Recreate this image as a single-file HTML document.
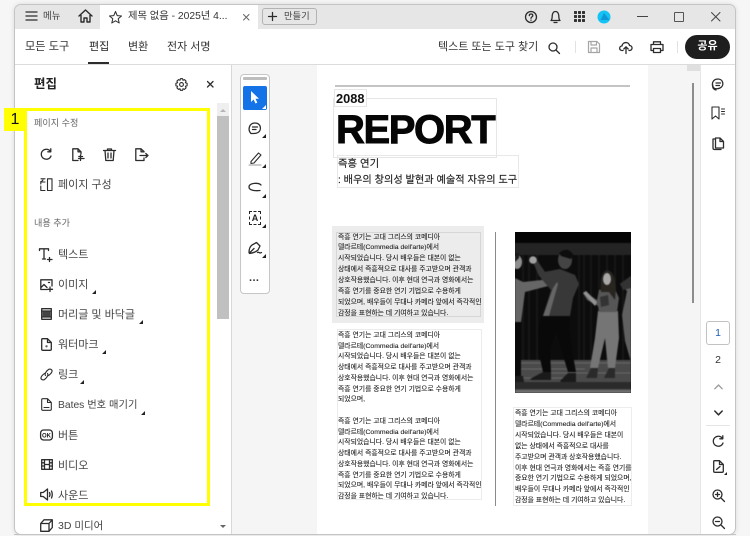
<!DOCTYPE html>
<html lang="ko">
<head>
<meta charset="utf-8">
<style>
html,body{margin:0;padding:0;width:750px;height:536px;overflow:hidden;background:#f6f6f6}
body{position:relative;font-family:"Liberation Sans","Noto Sans CJK KR",sans-serif;color:#2c2c2c}
.a{position:absolute;white-space:nowrap}
.t{position:absolute;white-space:nowrap;line-height:14px;height:14px}
svg{position:absolute;overflow:visible}
svg.i{fill:none;stroke:#2c2c2c;stroke-width:1.3;stroke-linecap:round;stroke-linejoin:round}
.tri{position:absolute;width:0;height:0;border-left:4px solid transparent;border-bottom:4px solid #222}
.m{font-size:11px;color:#444;left:58px}
.d{position:absolute;font-size:6.85px;line-height:10.73px;color:#222;white-space:nowrap;-webkit-text-stroke:.1px #222}
</style>
</head>
<body>
<div class="a" style="left:14px;top:4px;width:722px;height:531px;background:#fff;border:1px solid #c4c4c4;border-radius:7px;box-sizing:border-box;overflow:hidden;box-shadow:0 0 5px rgba(0,0,0,.12)">
  <div class="a" style="left:0;top:0;width:722px;height:24px;background:#e6e6e6"></div>
  <div class="a" style="left:85px;top:0;width:158px;height:24px;background:#fff"></div>
  <div class="a" style="left:0;top:59px;width:722px;height:1px;background:#dcdcdc"></div>
  <div class="a" style="left:216px;top:60px;width:86px;height:471px;background:#f5f5f5;border-left:1px solid #d8d8d8;box-sizing:border-box"></div>
  <div class="a" style="left:633px;top:60px;width:52px;height:471px;background:#f5f5f5"></div>
  <div class="a" style="left:672px;top:60px;width:13px;height:6px;background:#dfdfdf"></div>
  <div class="a" style="left:685px;top:60px;width:1px;height:471px;background:#e6e6e6"></div>
</div>

<!-- title bar -->
<svg class="i" style="left:26px;top:11px" width="12" height="11"><path d="M0 1H11M0 5H11M0 9H11"/></svg>
<div class="t" style="left:43px;top:10px;font-size:9.5px;color:#444">메뉴</div>
<svg class="i" style="left:78px;top:9px;stroke-width:1.4" width="15" height="14"><path d="M1 7 7.5 1 14 7M3 6V13H6V9H9V13H12V6"/></svg>
<svg class="i" style="left:109px;top:11px;stroke-width:1" width="13" height="13"><path d="M6.5 .5 8.2 4.6 12.5 5 9.2 7.8 10.2 12 6.5 9.8 2.8 12 3.8 7.8 .5 5 4.8 4.6Z"/></svg>
<div class="t" style="left:128px;top:10px;font-size:10.3px;color:#333">제목 없음 - 2025년 4...</div>
<svg class="i" style="left:243px;top:14px;stroke:#666;stroke-width:1" width="7" height="7"><path d="M.5 .5 6 6M6 .5 .5 6"/></svg>
<div class="a" style="left:262px;top:8px;width:55px;height:17px;border:1px solid #b3b3b3;border-radius:3px;box-sizing:border-box"></div>
<svg class="i" style="left:268px;top:12px;stroke-width:1.3" width="9" height="9"><path d="M4.5 .5V8.5M.5 4.5H8.5"/></svg>
<div class="t" style="left:284px;top:9px;font-size:9.3px;color:#444">만들기</div>

<svg class="i" style="left:525px;top:11px" width="12" height="12"><circle cx="6" cy="6" r="5.5"/><path d="M4.3 4.6C4.3 2.5 7.8 2.5 7.8 4.6 7.8 6 6 5.8 6 7.3M6 9V9.3"/></svg>
<svg class="i" style="left:550px;top:10px" width="11" height="14"><path d="M1 10.5C2.5 9 2 7 2.3 5 2.7 2.8 4 1.5 5.5 1.5S8.3 2.8 8.7 5C9 7 8.5 9 10 10.5ZM4 12.5H7"/></svg>
<svg style="left:574px;top:11px" width="11" height="11" fill="#333"><rect x="0" y="0" width="3" height="3" rx=".6"/><rect x="4" y="0" width="3" height="3" rx=".6"/><rect x="8" y="0" width="3" height="3" rx=".6"/><rect x="0" y="4" width="3" height="3" rx=".6"/><rect x="4" y="4" width="3" height="3" rx=".6"/><rect x="8" y="4" width="3" height="3" rx=".6"/><rect x="0" y="8" width="3" height="3" rx=".6"/><rect x="4" y="8" width="3" height="3" rx=".6"/><rect x="8" y="8" width="3" height="3" rx=".6"/></svg>
<svg style="left:597px;top:10px" width="14" height="14"><circle cx="7" cy="7" r="6.5" fill="#12c3f4"/><path d="M7 3 12.5 10H3.5Z" fill="#1196d6"/></svg>
<div class="a" style="left:637px;top:16px;width:11px;height:1.3px;background:#444"></div>
<div class="a" style="left:674px;top:12px;width:10px;height:10px;border:1px solid #555;box-sizing:border-box;border-radius:1px"></div>
<svg class="i" style="left:711px;top:12px;stroke:#444;stroke-width:1" width="10" height="10"><path d="M.5 .5 9 9M9 .5 .5 9"/></svg>

<!-- menu row -->
<div class="t" style="left:25px;top:40px;font-size:11.2px;color:#333">모든 도구</div>
<div class="t" style="left:89px;top:40px;font-size:11px;color:#222">편집</div>
<div class="t" style="left:128px;top:40px;font-size:11px;color:#333">변환</div>
<div class="t" style="left:167px;top:40px;font-size:11px;color:#333">전자 서명</div>
<div class="a" style="left:88px;top:62px;width:21px;height:2px;background:#2c2c2c"></div>

<div class="t" style="left:438px;top:40px;font-size:11px;color:#333">텍스트 또는 도구 찾기</div>
<svg class="i" style="left:548px;top:42px" width="12" height="12"><circle cx="5" cy="5" r="4"/><path d="M8 8 11.5 11.5"/></svg>
<div class="a" style="left:575px;top:41px;width:1px;height:12px;background:#e2e2e2"></div>
<svg class="i" style="left:588px;top:41px;stroke:#a5a5a5;stroke-width:1.2" width="12" height="12"><path d="M.5 .5H9L11.5 3V11.5H.5ZM3 .5V4H8.5V.5M3 11.5V7H9V11.5"/></svg>
<svg class="i" style="left:619px;top:41px" width="14" height="13"><path d="M4 9.5H3C-.2 9.5 0 5 3 5 3.5 .5 10 .5 10.5 4.5 13.8 4.5 14 9.5 10.5 9.5H10M7 12.5V6M4.8 8 7 5.8 9.2 8"/></svg>
<svg class="i" style="left:650px;top:41px" width="14" height="12"><path d="M3.5 3V.8H10.5V3M3 9.5H1V3.5H13V9.5H11M3.5 7.5H10.5V11.5H3.5Z"/></svg>
<div class="a" style="left:677px;top:41px;width:1px;height:12px;background:#e2e2e2"></div>
<div class="a" style="left:685px;top:35px;width:45px;height:24px;background:#1e1e1e;border-radius:12px;color:#fff;font-size:11px;font-weight:700;text-align:center;line-height:23px">공유</div>

<!-- left panel -->
<div class="t" style="left:34px;top:77px;font-size:12.5px;font-weight:700;color:#222">편집</div>
<svg class="i" style="left:175px;top:78px;stroke-width:1.1" width="13" height="13"><circle cx="6.5" cy="6.5" r="1.9"/><path d="M5.4 .7H7.6L8 2.3 9.5 1.6 11.1 3.2 10.4 4.7 12.1 5.3V7.7L10.4 8.3 11.1 9.8 9.5 11.4 8 10.7 7.6 12.3H5.4L5 10.7 3.5 11.4 1.9 9.8 2.6 8.3 .9 7.7V5.3L2.6 4.7 1.9 3.2 3.5 1.6 5 2.3Z"/></svg>
<svg class="i" style="left:207px;top:81px" width="7" height="7"><path d="M.5 .5 6 6M6 .5 .5 6"/></svg>

<div class="a" style="left:24px;top:108px;width:186px;height:398px;border:3px solid #ffff00;box-sizing:border-box"></div>
<div class="a" style="left:4px;top:108px;width:22px;height:23px;background:#ffff00;color:#111;font-size:16px;line-height:23px;text-align:center">1</div>

<div class="t" style="left:34px;top:116px;font-size:9.1px;color:#666">페이지 수정</div>
<svg class="i" style="left:40px;top:148px" width="12" height="13"><path d="M10.5 3.5A5 5 0 1 0 11 8M10.8 .8V3.8H7.8"/></svg>
<svg class="i" style="left:72px;top:148px" width="13" height="14"><path d="M6 12.5H.8V.8H6L9 3.8V6M6 .8V3.8H9M8.5 7V12.5M6.5 10.5H12M6.8 8.5H10.5"/></svg>
<svg class="i" style="left:103px;top:148px" width="13" height="13"><path d="M.5 2.5H12.5M4.5 2.5V1H8.5V2.5M2 2.5 2.8 12.5H10.2L11 2.5M5 5V10M8 5V10"/></svg>
<svg class="i" style="left:135px;top:148px" width="14" height="13"><path d="M9 4V3.5L6 .8H.8V12.5H9V10M6 .8V3.8H9M5 7.5H13M10.8 5.5 13 7.5 10.8 9.5"/></svg>
<svg class="i" style="left:40px;top:178px;stroke-width:1.1" width="13" height="13"><path d="M7.5 .8H12V12.5H7.5ZM5 .8H1M.8 3.5V6M.8 8V12.5H5M.8 4H5M3 2 1 4"/></svg>
<div class="t m" style="top:178px">페이지 구성</div>

<div class="t" style="left:34px;top:216px;font-size:9.1px;color:#666">내용 추가</div>

<svg class="i" style="left:39px;top:248px" width="14" height="14"><path d="M.5 2.5V.8H9.5V2.5M5 .8V11M3.5 11H6.5M10.5 9.5V13.5M8.5 11.5H13"/></svg>
<div class="t m" style="top:248px">텍스트</div>
<svg class="i" style="left:40px;top:279px" width="13" height="13"><path d="M7.5 10.5H.8V.8H12V7M1 8.5 4 5.5 7 8.5M8.5 3.5H9.5M10 8V12.5M8 10.3H12.5"/></svg>
<div class="t m" style="top:278px">이미지</div>
<div class="tri" style="left:92px;top:290px"></div>
<svg class="i" style="left:41px;top:308px" width="11" height="12"><rect x=".7" y=".7" width="9.6" height="10.6"/><path d="M.7 3H10.3M.7 9H10.3"/><rect x="1.5" y="3.5" width="8" height="5" fill="#444" stroke="none"/></svg>
<div class="t m" style="top:308px">머리글 및 바닥글</div>
<div class="tri" style="left:139px;top:320px"></div>
<svg class="i" style="left:41px;top:338px" width="11" height="13"><path d="M6.5 .7H1.7Q.7 .7 .7 1.7V11.3Q.7 12.3 1.7 12.3H9.3Q10.3 12.3 10.3 11.3V4.5ZM6.5 .7V4.5H10.3"/><circle cx="5.5" cy="8.3" r="1.2" fill="#666" stroke="none"/></svg>
<div class="t m" style="top:338px">워터마크</div>
<div class="tri" style="left:102px;top:350px"></div>
<svg class="i" style="left:40px;top:368px;stroke-width:1.1" width="13" height="13"><path d="M5.5 7.5C4 6 7 2.5 8.5 1.5 10 .5 12.5 1.5 12 3.5 11.8 4.8 9.5 7 8 7.8M7.5 5.5C9 7 6 10.5 4.5 11.5 3 12.5 .5 11.5 1 9.5 1.2 8.2 3.5 6 5 5.2"/></svg>
<div class="t m" style="top:368px">링크</div>
<div class="tri" style="left:80px;top:380px"></div>
<svg class="i" style="left:41px;top:398px" width="11" height="13"><path d="M6.5 .7H1.7Q.7 .7 .7 1.7V11.3Q.7 12.3 1.7 12.3H9.3Q10.3 12.3 10.3 11.3V4.5ZM6.5 .7V4.5H10.3M3 9.5H8" stroke-width="1.1"/></svg>
<div class="t" style="left:58px;top:399px;font-size:10.3px;color:#444">Bates 번호 매기기</div>
<div class="tri" style="left:141px;top:411px"></div>
<svg class="i" style="left:40px;top:429px" width="13" height="12"><rect x=".6" y="1" width="11.8" height="10" rx="3"/><text x="6.5" y="8.3" font-size="6" font-weight="700" text-anchor="middle" fill="#222" stroke="none" font-family="Liberation Sans">OK</text></svg>
<div class="t m" style="top:429px">버튼</div>
<svg class="i" style="left:41px;top:459px" width="12" height="11"><rect x=".7" y=".7" width="10.6" height="9.6"/><path d="M3.5 .7V10.3M8.5 .7V10.3M.7 3.8H3.5M.7 7H3.5M8.5 3.8H11.3M8.5 7H11.3M3.5 5.5H8.5"/></svg>
<div class="t m" style="top:459px">비디오</div>
<svg class="i" style="left:40px;top:488px" width="14" height="13"><path d="M.7 4.5H3.2L7.5 1V12L3.2 8.5H.7ZM9.5 4.5Q10.5 6.5 9.5 8.5M11.5 3Q13 6.5 11.5 10"/></svg>
<div class="t m" style="top:489px">사운드</div>
<svg class="i" style="left:40px;top:519px" width="13" height="13"><path d="M.7 4.5H9V12.3H.7ZM.7 4.5 4 .8H12.3L9 4.5M12.3 .8V8.500L9 12.3"/></svg>
<div class="t" style="left:58px;top:519px;font-size:10.5px;color:#444">3D 미디어</div>

<!-- panel scrollbar -->
<div class="a" style="left:217px;top:103px;width:12px;height:14px;background:#efefef"></div>
<div class="a" style="left:217px;top:116px;width:12px;height:203px;background:#c0c0c0"></div>
<div class="a" style="left:220px;top:109px;width:0;height:0;border-left:3px solid transparent;border-right:3px solid transparent;border-bottom:3px solid #b5b5b5"></div>
<div class="a" style="left:220px;top:525px;width:0;height:0;border-left:3px solid transparent;border-right:3px solid transparent;border-top:3px solid #666"></div>

<!-- vertical tool strip -->
<div class="a" style="left:240px;top:74px;width:30px;height:220px;background:#fff;border:1px solid #c6c6c6;border-radius:4px;box-sizing:border-box"></div>
<div class="a" style="left:243px;top:77px;width:24px;height:3px;background:#bdbdbd;border-radius:1px"></div>
<div class="a" style="left:243px;top:86px;width:24px;height:24px;background:#1473e6;border-radius:2px"></div>
<svg style="left:250px;top:91px" width="11" height="14" fill="#fff"><path d="M1 0V11L3.6 8.5 5.5 12.5 7.3 11.6 5.5 7.8H9Z"/></svg>
<div class="tri" style="left:262px;top:105px;border-bottom-color:#fff"></div>
<svg class="i" style="left:248px;top:122px" width="14" height="13"><path d="M3 11.5C-.5 8 1 1 7 1S14 8 10 10.5C8 11.8 5 11.5 3 11.5ZM4.500 5H9.500M4.500 7.500H8"/></svg>
<div class="tri" style="left:262px;top:134px"></div>
<svg class="i" style="left:248px;top:151px" width="15" height="15"><path d="M3 10.5 10.5 2 13 4 6 12 3 12.5Z" stroke-width="1.1"/><path d="M1 14H13" stroke="#999" stroke-width="1.1"/></svg>
<div class="tri" style="left:262px;top:164px"></div>
<svg class="i" style="left:248px;top:182px" width="14" height="11"><path d="M13 3C11 .5 1 .5 1 5 1 8.500 7 9 12 8.500"/></svg>
<div class="tri" style="left:262px;top:194px"></div>
<div class="a" style="left:249px;top:211px;width:12px;height:14px;border:1px dashed #222;box-sizing:border-box;font-size:9px;font-weight:700;line-height:13px;text-align:center;color:#222">A</div>
<div class="tri" style="left:262px;top:224px"></div>
<svg class="i" style="left:248px;top:241px" width="15" height="15"><path d="M1 11.5C1 8 2 5.5 4 4L8.5 1.5 12 5 10 9C8 11 5 12 1.5 12.5ZM1.5 12 6 7.5M9.5 11.5C11 10.5 11.5 13 13.5 11.5"/></svg>
<div class="tri" style="left:262px;top:254px"></div>
<div class="t" style="left:249px;top:271px;font-size:11px;font-weight:700;letter-spacing:.4px;color:#333">...</div>

<!-- page -->
<div class="a" style="left:335px;top:85px;width:295px;height:2px;background:#c4c4c4"></div>
<div class="a" style="left:333px;top:98px;width:164px;height:60px;border:1px solid #e6e6e6;box-sizing:border-box"></div>
<div class="a" style="left:334px;top:89px;width:33px;height:18px;border:1px solid #e6e6e6;background:#fff;box-sizing:border-box"></div>
<div class="t" style="left:336px;top:92px;font-size:12.8px;font-weight:700;color:#111">2088</div>
<div class="a" style="left:336px;top:106px;font-size:40px;line-height:48px;font-weight:700;color:#060606;letter-spacing:-1.4px;-webkit-text-stroke:.9px #060606">REPORT</div>
<div class="a" style="left:337px;top:155px;width:182px;height:33px;border:1px solid #e8e8e8;box-sizing:border-box"></div>
<div class="t" style="left:338px;top:158px;font-size:10.4px;color:#222;-webkit-text-stroke:.15px #222">즉흥 연기</div>
<div class="t" style="left:338px;top:174px;font-size:10.2px;color:#222;-webkit-text-stroke:.15px #222">: 배우의 창의성 발현과 예술적 자유의 도구</div>

<div class="a" style="left:332px;top:226px;width:152px;height:97px;background:#ececec"></div>
<div class="a" style="left:336px;top:232px;width:145px;height:85px;border:1px solid #d6d6d6;box-sizing:border-box"></div>
<div class="d" style="left:338px;top:232.5px;line-height:10.95px">즉흥 연기는 고대 그리스의 코메디아<br>델라르테(Commedia dell'arte)에서<br>시작되었습니다. 당시 배우들은 대본이 없는<br>상태에서 즉흥적으로 대사를 주고받으며 관객과<br>상호작용했습니다. 이후 현대 연극과 영화에서는<br>즉흥 연기를 중요한 연기 기법으로 수용하게<br>되었으며, 배우들이 무대나 카메라 앞에서 즉각적인<br>감정을 표현하는 데 기여하고 있습니다.</div>

<div class="a" style="left:337px;top:329px;width:145px;height:171px;border:1px solid #ececec;box-sizing:border-box"></div>
<div class="d" style="left:338px;top:331px">즉흥 연기는 고대 그리스의 코메디아<br>델라르테(Commedia dell'arte)에서<br>시작되었습니다. 당시 배우들은 대본이 없는<br>상태에서 즉흥적으로 대사를 주고받으며 관객과<br>상호작용했습니다. 이후 현대 연극과 영화에서는<br>즉흥 연기를 중요한 연기 기법으로 수용하게<br>되었으며,<br>&nbsp;<br>즉흥 연기는 고대 그리스의 코메디아<br>델라르테(Commedia dell'arte)에서<br>시작되었습니다. 당시 배우들은 대본이 없는<br>상태에서 즉흥적으로 대사를 주고받으며 관객과<br>상호작용했습니다. 이후 현대 연극과 영화에서는<br>즉흥 연기를 중요한 연기 기법으로 수용하게<br>되었으며, 배우들이 무대나 카메라 앞에서 즉각적인<br>감정을 표현하는 데 기여하고 있습니다.</div>

<div class="a" style="left:495px;top:232px;width:1px;height:274px;background:#8a8a8a"></div>

<!-- photo -->
<div class="a" style="left:515px;top:232px;width:116px;height:161px;overflow:hidden;background:#0c0c0c">
<svg style="left:0;top:0;filter:blur(.6px)" width="116" height="161" viewBox="0 0 116 161">
<rect width="116" height="161" fill="#0c0c0c"/>
<rect y="0" width="116" height="11" fill="#050505"/>
<rect y="11" width="116" height="12" fill="#242424"/>
<path d="M8 23V128M14 23V128M22 23V128M64 23V128M69 23V128M76 23V128M84 23V128M92 23V128M100 23V128M108 23V128" stroke="#1a1a1a" stroke-width="1.5"/>
<rect y="128" width="116" height="33" fill="#4a4a4a"/>
<path d="M0 131H116M0 137H70M30 141H116M0 146H50" stroke="#8a8a8a" stroke-width="1" opacity=".45"/>
<path d="M0 150H116V157H0Z" fill="#262626" opacity=".85"/>
<rect y="158" width="116" height="3" fill="#6e6e6e"/>
<!-- left person -->
<path d="M0 84H6V146L0 146Z" fill="#0a0a0a"/>
<path d="M0 46 8 50 36 47 37 53 10 60 6 90H0Z" fill="#666"/>
<ellipse cx="2" cy="30" rx="5" ry="7" fill="#8e8e8e"/><path d="M0 21H4V26L0 30Z" fill="#1a1a1a"/>
<path d="M0 144H8L9 150H0Z" fill="#1c1c1c"/>
<circle cx="34" cy="48" r="3.5" fill="#b8b8b8"/>
<!-- man -->
<path d="M26 84C24 96 22 108 24 122L28 140H36L35 118 41 100 47 120 53 140H61L57 118 55 100 54 84Z" fill="#090909"/>
<path d="M15 147 28 140H36V148H16ZM45 149 53 141H61V150H46Z" fill="#1a1a1a"/>
<path d="M29 40 45 37 60 43 64 52 58 66 55 84 28 84 36 58 24 44 18 30 22 28 30 40Z" fill="#383838"/>
<path d="M38 56 42 50 43 52 34 84H28Z" fill="#666"/>
<circle cx="18" cy="28" r="3.8" fill="#a0a0a0"/>
<ellipse cx="50" cy="28" rx="7" ry="9" fill="#444"/>
<path d="M44 21Q52 14 58 22L56 27 46 24Z" fill="#0d0d0d"/>
<!-- woman -->
<path d="M83 79H103L104 106 100 136H93L90 106 83 136H75L80 106Z" fill="#757575"/>
<path d="M84 58 92 56 100 57 104 66 102 80H84L83 74 72 68 68 61 70 60 82 68Z" fill="#565656"/>
<path d="M68 61 71 59 82 70 80 74Z" fill="#929292"/>
<path d="M86 60Q84 40 92 38 100 39 101 56L100 68 94 60Z" fill="#282420"/>
<ellipse cx="92" cy="47" rx="4" ry="6" fill="#a8a8a8"/>
<path d="M85 65 93 63 94 73 86 75Z" fill="#333"/>
<path d="M76 136H83L82 146H71ZM94 136H100V146H89Z" fill="#2a2a2a"/>
<!-- right person -->
<path d="M116 44 105 52 112 59 107 83 110 109 116 130Z" fill="#606060"/>
<path d="M116 44 105 52 108 58 116 56Z" fill="#333"/>
</svg>
</div>

<div class="a" style="left:513px;top:407px;width:119px;height:99px;border:1px solid #ececec;box-sizing:border-box"></div>
<div class="d" style="left:515px;top:409px;line-height:10.9px">즉흥 연기는 고대 그리스의 코메디아<br>델라르테(Commedia dell'arte)에서<br>시작되었습니다. 당시 배우들은 대본이<br>없는 상태에서 즉흥적으로 대사를<br>주고받으며 관객과 상호작용했습니다.<br>이후 현대 연극과 영화에서는 즉흥 연기를<br>중요한 연기 기법으로 수용하게 되었으며,<br>배우들이 무대나 카메라 앞에서 즉각적인<br>감정을 표현하는 데 기여하고 있습니다.</div>

<div class="a" style="left:14px;top:534px;width:722px;height:1px;background:#c4c4c4"></div>

<!-- page scrollbar -->
<div class="a" style="left:692px;top:83px;width:2px;height:220px;background:#8d8d8d"></div>

<!-- right sidebar -->
<svg class="i" style="left:711px;top:78px" width="14" height="13"><path d="M3.5 10.5C-.5 7 1.5 1 7 1S13.5 8 9 10C7.5 10.8 5 10.8 3.5 10.5ZM5 5H9.5M5 7.5H8.5M1.8 7Q1 11 5 12"/></svg>
<svg class="i" style="left:711px;top:106px" width="15" height="14"><path d="M1 1H8V13L4.5 10 1 13ZM10.5 3H13.5M10.5 5.5H13.5M10.5 8H13.5" stroke-width="1.1"/></svg>
<svg class="i" style="left:712px;top:137px" width="13" height="14"><path d="M2.5 2H1V11Q1 12.5 2.5 12.5H9M3.5 1H8L11.5 4.5V11H3.5ZM8 1V4.5H11.5"/></svg>
<div class="a" style="left:706px;top:321px;width:24px;height:24px;border:1px solid #c2c2c2;border-radius:3px;box-sizing:border-box;text-align:center;font-size:10.5px;line-height:22px;color:#1a5fb4">1</div>
<div class="a" style="left:706px;top:353px;width:24px;text-align:center;font-size:10.5px;line-height:14px;color:#333">2</div>
<svg class="i" style="left:714px;top:384px;stroke:#9a9a9a" width="9" height="6"><path d="M.8 4.8 4.5 1 8.2 4.8"/></svg>
<svg class="i" style="left:714px;top:410px;stroke-width:1.5" width="9" height="6"><path d="M.8 1 4.5 4.8 8.2 1"/></svg>
<div class="a" style="left:706px;top:425px;width:24px;height:1px;background:#e4e4e4"></div>
<svg class="i" style="left:712px;top:435px" width="12" height="13"><path d="M10.5 3.5A5 5 0 1 0 11 8M10.8 .8V3.8H7.8"/></svg>
<svg class="i" style="left:713px;top:460px" width="11" height="14"><path d="M6.5 .7H1.7Q.7 .7 .7 1.7V11.3Q.7 12.3 1.7 12.3H9.3Q10.3 12.3 10.3 11.3V4.5ZM6.5 .7V4.5H10.3M3.5 9.5 7 6.500"/></svg>
<div class="tri" style="left:724px;top:472px;border-left-width:3px;border-bottom-width:3px"></div>
<svg class="i" style="left:712px;top:489px" width="13" height="13"><circle cx="5.5" cy="5.5" r="4.5"/><path d="M9 9 12.5 12.5M3.5 5.5H7.5M5.5 3.5V7.5"/></svg>
<svg class="i" style="left:712px;top:516px" width="13" height="13"><circle cx="5.5" cy="5.5" r="4.5"/><path d="M9 9 12.5 12.5M3.5 5.5H7.5"/></svg>
</body>
</html>
